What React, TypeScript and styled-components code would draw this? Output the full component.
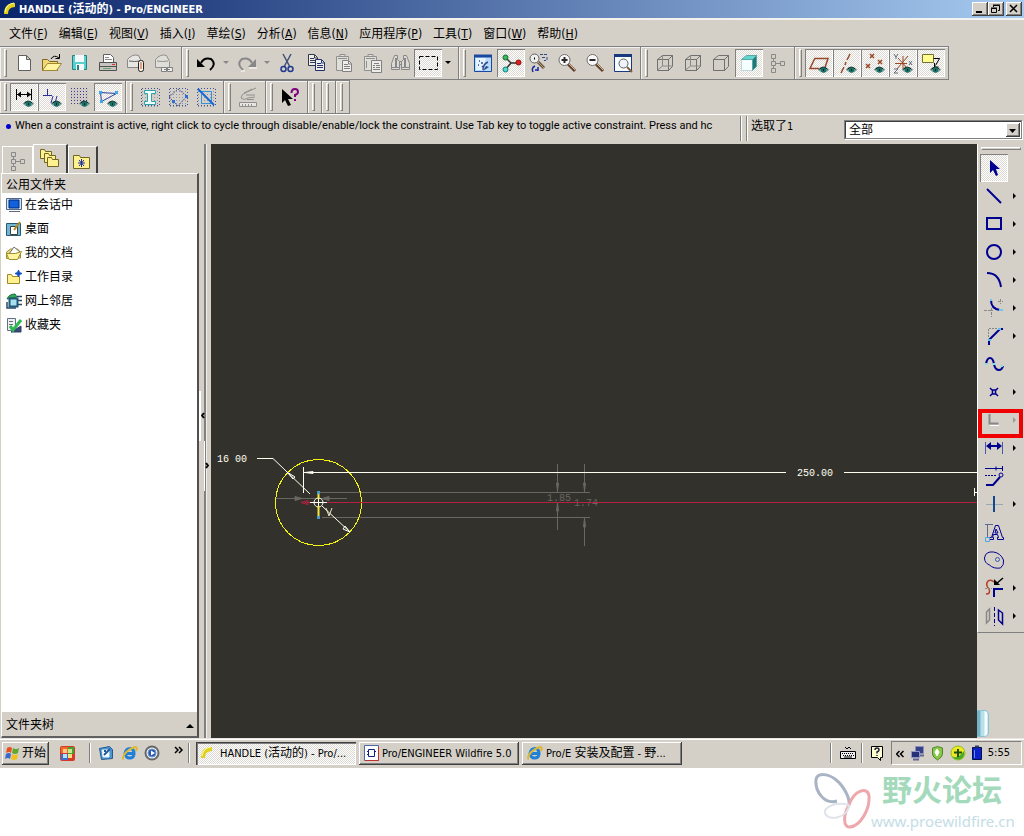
import React from "react";
import styled, { createGlobalStyle, css } from "styled-components";

const face = "#d4d0c8";
const shade = "#808080";
const navy = "#000090";
const dither = css`
  background: conic-gradient(#fff 25%, #dcd9d3 0 50%, #fff 0 75%, #dcd9d3 0) 0 0 / 2px 2px;
`;
const raised = css`
  box-shadow: inset -1px -1px #404040, inset 1px 1px #fff, inset -2px -2px ${shade};
`;

const Global = createGlobalStyle`
  *, *::before, *::after { box-sizing: border-box; }
  body { margin: 0; background: #fff; }
  body, button, select {
    font-family: "DejaVu Sans Condensed", "Noto Sans CJK SC", sans-serif;
    font-size: 12px;
    line-height: 16px;
    color: #000;
  }
  button { border: 0; padding: 0; margin: 0; background: none; text-align: left; }
  svg { display: block; }
`;

const Page = styled.div`
  min-height: 100vh;
  display: flex;
  flex-direction: column;
`;
const Desktop = styled.div`
  flex: 1;
  display: flex;
  flex-direction: column;
  background: ${face};
`;
const Latin = styled.span<{ $size?: number }>`
  font-size: ${(p) => p.$size ?? 11}px;
`;

const TitleBar = styled.header`
  display: flex;
  align-items: center;
  height: 18px;
  padding: 0 2px 0 4px;
  gap: 4px;
  background: linear-gradient(90deg, #0a246a, #a6caf0);
`;
const Title = styled.h1`
  flex: 1;
  margin: 0;
  font-size: 12px;
  line-height: 18px;
  font-weight: bold;
  color: #fff;
`;
const WindowButtons = styled.div`
  display: flex;
`;
const WindowButton = styled.button<{ $apart?: boolean }>`
  width: 16px;
  height: 14px;
  margin-left: ${(p) => (p.$apart ? 2 : 0)}px;
  background: ${face};
  ${raised}
`;

const MenuBar = styled.nav`
  display: flex;
  align-items: center;
  gap: 11px;
  height: 28px;
  padding: 3px 9px 0;
  box-shadow: inset 0 2px #f4f2ee;
`;
const MenuItem = styled.button`
  white-space: nowrap;
  height: 20px;
`;

const ToolRow = styled.div`
  display: flex;
  height: 34px;
`;
const Group = styled.div`
  display: flex;
  align-items: center;
  padding: 0 3px 0 4px;
  border-top: 1px solid ${shade};
  border-bottom: 1px solid ${shade};
  border-right: 1px solid ${shade};
  box-shadow: inset 1px 1px #f4f2ee;
`;
const Grip = styled.span`
  width: 3px;
  height: 28px;
  margin-right: 3px;
  border: 1px solid #fff;
  border-right-color: ${shade};
  border-bottom-color: ${shade};
`;
const ToolButton = styled.button<{ $on?: boolean }>`
  width: 28px;
  height: 28px;
  flex: none;
  ${(p) =>
    p.$on &&
    css`
      ${dither}
      box-shadow: inset 1px 1px ${shade}, inset -1px -1px #fff;
    `}
`;
const DropButton = styled.button`
  width: 13px;
  height: 28px;
`;
const BlankGroup = styled(Group)`
  width: 14px;
`;

const MessageBar = styled.div`
  display: flex;
  height: 30px;
  box-shadow: inset 0 1px #fff;
`;
const Message = styled.p`
  flex: 1;
  min-width: 0;
  margin: 0;
  padding: 4px 0 0 5px;
  display: flex;
  gap: 4px;
  overflow: hidden;
  white-space: nowrap;
  font-family: Roboto, sans-serif;
  font-size: 11px;
`;
const Bullet = styled.span`
  width: 5px;
  height: 5px;
  margin: 6px 0 0 1px;
  border-radius: 50%;
  background: #0000d0;
`;
const BarSplit = styled.span`
  width: 7px;
  margin: 2px 0 3px;
  border-left: 1px solid ${shade};
  border-right: 1px solid ${shade};
  box-shadow: inset 1px 0 #fff, 1px 0 #fff;
`;
const Selected = styled.label`
  width: 97px;
  padding: 4px 0 0 4px;
  white-space: nowrap;
`;
const FilterBox = styled.div`
  display: flex;
  width: 178px;
  height: 19px;
  margin: 6px 2px 0 0;
  background: #fff;
  border: 1px solid ${shade};
  box-shadow: inset 1px 1px #404040, 1px 1px #fff;
  position: relative;
`;
const Filter = styled.select`
  flex: 1;
  appearance: none;
  border: 0;
  padding: 0 4px;
  background: transparent;
`;
const FilterArrow = styled.span`
  position: absolute;
  right: 1px;
  top: 2px;
  width: 14px;
  height: 14px;
  background: ${face};
  pointer-events: none;
  ${raised}
`;

const Body = styled.main`
  flex: 1;
  display: flex;
  min-height: 0;
`;
const Side = styled.aside`
  width: 199px;
  flex: none;
  display: flex;
  flex-direction: column;
  padding-left: 1px;
`;
const Tabs = styled.div`
  display: flex;
  align-items: flex-end;
  height: 29px;
  padding-left: 1px;
`;
const Tab = styled.button<{ $w: number; $kind: "flat" | "active" | "normal" }>`
  width: ${(p) => p.$w}px;
  height: ${(p) => (p.$kind === "active" ? 29 : 27)}px;
  border: 1px solid #fff;
  border-bottom: 0;
  ${(p) => p.$kind !== "flat" && "border-right: 2px solid #404040;"}
`;
const Panel = styled.section`
  flex: 1;
  display: flex;
  flex-direction: column;
  border: 1px solid #fff;
  border-right: 2px solid #505050;
  border-bottom: 2px solid #606060;
`;
const PanelHead = styled.h2`
  margin: 0;
  height: 19px;
  padding: 3px 4px 0;
  font-size: 12px;
  font-weight: normal;
`;
const Folders = styled.ul`
  flex: 1;
  margin: 0;
  padding: 0 4px;
  list-style: none;
  background: #fff;
`;
const Folder = styled.button`
  display: flex;
  align-items: center;
  gap: 3px;
  height: 24px;
`;
const TreeToggle = styled.button`
  display: flex;
  align-items: center;
  justify-content: space-between;
  height: 24px;
  padding: 2px 3px 0 4px;
`;
const Splitter = styled.div`
  width: 12px;
  flex: none;
  display: flex;
  align-items: center;
  background: linear-gradient(90deg, ${face} 5px, ${shade} 5px 7px, #f0eeea 7px 8px, ${face} 8px);
`;
const SplitButton = styled.button<{ $low?: boolean }>`
  width: 5px;
  height: 50px;
  flex: none;
  margin: ${(p) => (p.$low ? "49px 0 0 0" : "0 0 51px 0")};
  border-left: ${(p) => (p.$low ? 1 : 2)}px solid #fff;
`;
const Viewport = styled.div`
  flex: 1;
  min-width: 0;
  background: #33312c;
  overflow: hidden;
  position: relative;
`;
const Drawing = styled.svg`
  position: absolute;
  inset: 0;
  width: 100%;
  height: 100%;
  font: 10px "Liberation Mono", monospace;
`;
const RightBar = styled.div`
  width: 47px;
  flex: none;
  display: flex;
  flex-direction: column;
  justify-content: space-between;
`;
const SketchTools = styled.div`
  padding: 3px 2px 2px;
  border-left: 1px solid #fff;
  border-bottom: 1px solid ${shade};
`;
const TopGrip = styled.div`
  height: 3px;
  margin: 0 1px 4px;
  border: 1px solid #fff;
  border-right-color: ${shade};
  border-bottom-color: ${shade};
`;
const SketchRow = styled.div<{ $marked?: boolean }>`
  display: flex;
  position: relative;
  ${(p) =>
    p.$marked &&
    css`
      &::after {
        content: "";
        position: absolute;
        inset: 3px -1px -4px -2px;
        border: 4px solid #f00000;
        pointer-events: none;
      }
    `}
`;
const Flyout = styled.button`
  width: 12px;
  height: 28px;
`;
const Gadget = styled.div`
  width: 12px;
  height: 27px;
  margin-bottom: 1px;
  border-radius: 0 5px 5px 0;
  border: 1px solid #88c4d4;
  border-left: 0;
  background: linear-gradient(90deg, #78b4c8 3px, #b8e0ec 4px 7px, #f4fcff 8px 10px, #a8d8e8);
`;

const TaskBar = styled.footer`
  display: flex;
  align-items: center;
  height: 30px;
  padding: 0 2px;
  background: ${face};
  box-shadow: inset 0 1px #e8e5e0, inset 0 2px #fff;
`;
const Start = styled.button`
  display: flex;
  align-items: center;
  gap: 2px;
  width: 47px;
  height: 23px;
  padding-left: 2px;
  white-space: nowrap;
  ${raised}
`;
const Quick = styled.div`
  display: flex;
  align-items: center;
  width: 147px;
  padding-left: 10px;
`;
const QuickButton = styled.button<{ $gap?: number }>`
  margin-right: ${(p) => p.$gap ?? 8}px;
`;
const Divider = styled.span<{ $gap?: number }>`
  width: 2px;
  height: 20px;
  margin-right: ${(p) => p.$gap ?? 6}px;
  border-left: 1px solid ${shade};
  border-right: 1px solid #fff;
`;
const Tasks = styled.div`
  flex: 1;
  display: flex;
  gap: 3px;
  min-width: 0;
`;
const Task = styled.button<{ $on?: boolean }>`
  display: flex;
  align-items: center;
  gap: 3px;
  width: 160px;
  height: 23px;
  padding-left: 5px;
  white-space: nowrap;
  overflow: hidden;
  ${raised}
  ${(p) =>
    p.$on &&
    css`
      ${dither}
      box-shadow: inset 1px 1px #404040, inset 2px 2px ${shade}, inset -1px -1px #fff;
    `}
`;
const Tray = styled.div`
  display: flex;
  align-items: center;
  justify-content: space-between;
  width: 131px;
  height: 24px;
  padding: 0 11px 0 4px;
  border: 1px solid ${shade};
  border-right-color: #fff;
  border-bottom-color: #fff;
`;
const Brand = styled.div`
  display: flex;
  justify-content: flex-end;
  height: 68px;
  padding: 4px 9px 0 0;
  background: #fff;
`;
const BrandText = styled.div`
  width: 144px;
  white-space: nowrap;
`;
const BrandName = styled.div`
  padding-left: 11px;
  font: bold 30px/32px "Noto Sans CJK SC", sans-serif;
  color: #a4dabb;
`;
const BrandLink = styled.a`
  display: block;
  margin-top: 7px;
  font: 15px/20px "Noto Sans", sans-serif;
  color: #c4dde6;
  text-decoration: none;
`;

/* Sizes the Latin runs of a mixed label one step below the Chinese ones. */
const Mixed = ({ text }: { text: string }) => (
  <span>
    {text.split(/([\u3000-\u9fff]+)/).map((part, i) =>
      i % 2 ? <React.Fragment key={i}>{part}</React.Fragment> : <Latin key={i}>{part}</Latin>
    )}
  </span>
);

const Svg = ({ w = 28, h = 28, children }: { w?: number; h?: number; children: React.ReactNode }) => (
  <svg width={w} height={h} viewBox={`0 0 ${w} ${h}`} fill="none" stroke="#000" aria-hidden="true">
    {children}
  </svg>
);
const Eye = () => (
  <g stroke="none">
    <path d="M13 21q5-6 11 0q-5 5-11 0z" fill="#80a8a0" />
    <path d="M13 21q5-7 11 0q-5-3-11 0z" fill="#102020" />
    <circle cx="18.500" cy="21" r="2.800" fill="#187068" />
    <path d="M18 20h1v2h-1z" fill="#002828" />
  </g>
);
const Sheet = ({ x, y, c }: { x: number; y: number; c: string }) => (
  <g transform={`translate(${x} ${y})`} stroke={c}>
    <path d="M.5.5h6l3 3v8h-9z" fill="#f0eeea" />
    <path d="M2 4.500h4M2 6.500h6M2 8.500h6M6.500 1v3h3" />
  </g>
);
const grey = "#909090";
const Cube = ({ hidden, solid }: { hidden?: boolean; solid?: boolean }) => (
  <g stroke={solid ? "#58a8a8" : "#707070"}>
    <path d="M6.500 10.500h11v11h-11z" fill={solid ? "#f4ffff" : "none"} stroke={solid ? "#c0d8d8" : "#707070"} />
    <path d="M6.500 10.500l5-4h10l-4 4z" fill={solid ? "#60d8d0" : "none"} />
    <path d="M21.500 6.500v11l-4 4v-11z" fill={solid ? "#207878" : "none"} />
    {hidden && <path d="M11.500 7v10h10M11.500 17l-5 4" stroke="#888" />}
  </g>
);
const Tree = () => (
  <path d="M8.500 5.500h4v4h-4zM8.500 12.500h4v4h-4zM8.500 19.500h4v4h-4zM17.500 12.500h4v4h-4zM10.500 9.500v3M10.500 16.500v3M12.500 14.500h5" stroke="#888" />
);
const Dots = () => (
  <g stroke="#405090" strokeDasharray="1 2">
    <path d="M6 5.500h18M6 8.500h18M6 11.500h18M6 14.500h18M6 17.500h18M6 20.500h18M6 23.500h18" strokeOpacity=".45" />
    <path d="M6 5.500h18M6 22.500h18M5.500 6v16M23.500 6v16" />
  </g>
);
const Lens = ({ sign }: { sign: string }) => (
  <>
    <path d="M15 15l7 7" stroke="#604030" strokeWidth="3" />
    <path d="M16 15l6 6" stroke="#d8b888" />
    <circle cx="11.500" cy="11" r="5.500" stroke="#707070" fill="#f8f8f8" />
    <path d={sign} strokeWidth="2" stroke="#302828" />
  </>
);

const icons: Record<string, React.ReactNode> = {
  new: <path d="M8.500 6.500h8l4 4v11h-12zM16.500 6.500v4h4" fill="#fff" stroke="#606060" />,
  open: (
    <>
      <path d="M4.500 21.500v-11h5l2 2h8v9z" fill="#f0d878" stroke="#806818" />
      <path d="M4.500 21.500l5-7h14l-5 7z" fill="#fff4a0" stroke="#a08830" />
      <path d="M13 10q3-5 8-1M21.500 5v4.500h-4" />
    </>
  ),
  save: (
    <>
      <path d="M6.500 6.500h14v14h-14z" fill="#58d0d0" stroke="#288080" />
      <path d="M9 6h9v7H9zM10 15h8v6h-8z" fill="#f4f8f8" stroke="none" />
      <path d="M12 16v5" stroke="#288080" strokeWidth="2" />
    </>
  ),
  print: (
    <>
      <path d="M9.500 13.500v-8h7l3 3v5" fill="#fff" stroke="#606060" />
      <path d="M11 8.500h4M11 10.500h7" stroke="#888" />
      <path d="M5.500 13.500h17v8h-17z" fill="#c8c4c0" stroke="#505050" />
      <path d="M6 17.500h16" stroke="#505050" />
      <path d="M18 15.500h3" stroke="#e03020" />
      <path d="M9 19.500h8" stroke="#60a868" />
    </>
  ),
  disc: (
    <>
      <path d="M5.500 18.500v-8q5-6 11-4l3 6v6z" fill="#e8e6e2" stroke="#888" />
      <path d="M7 12q6 1 11 0" stroke="#606060" />
      <rect x="16.500" y="11.500" width="5" height="11" rx="2" fill="#f4f0e0" stroke="#202020" />
      <path d="M19 13v7" stroke="#c05020" />
    </>
  ),
  discLink: (
    <>
      <path d="M5.500 18.500v-8q5-6 11-4l3 6v6z" fill="#e0ded8" stroke={grey} />
      <path d="M7 12q6 1 11 0" stroke={grey} />
      <path d="M11.500 18.500h5v4h-5zM17.500 18.500h5v4h-5zM14 20.500h6" stroke="#808080" fill="#eee" />
    </>
  ),
  undo: (
    <>
      <path d="M9 14q3-6 10-4q6 5-1 11" strokeWidth="2" />
      <path d="M5 10v8h8z" fill="#000" stroke="none" />
    </>
  ),
  redo: (
    <>
      <path d="M19 14q-3-6-10-4q-6 5 1 11" stroke="#888" strokeWidth="2" />
      <path d="M23 10v8h-8z" fill="#888" stroke="none" />
      <path d="M8 22h4M16 19h8" stroke="#fff" />
    </>
  ),
  cut: (
    <>
      <path d="M9 5l7 13M17 5l-7 13" stroke="#405078" strokeWidth="1.500" />
      <circle cx="9.500" cy="20" r="2.500" stroke="#203890" strokeWidth="1.500" />
      <circle cx="16.500" cy="20" r="2.500" stroke="#203890" strokeWidth="1.500" />
    </>
  ),
  copy: (
    <>
      <Sheet x={6} y={5} c="#303848" />
      <Sheet x={13} y={10} c="#203070" />
    </>
  ),
  paste: (
    <>
      <path d="M6.500 7.500h12v14h-12zM10 7.500v-2h5v2M8 9.500h9" fill="#e0ded8" stroke={grey} />
      <Sheet x={12} y={11} c="#808080" />
    </>
  ),
  pasteSpecial: (
    <>
      <path d="M6.500 7.500h12v14h-12zM10 7.500v-2h5v2M8 9.500h9M8.500 12v7" fill="#e0ded8" stroke={grey} />
      <path d="M13.500 11.500h10v12h-10zM16 14.500h5M15 16.500h2M18 16.500h4M15 18.500h2M18 18.500h4M15 20.500h7" fill="#eeece8" stroke="#808080" />
    </>
  ),
  find: (
    <>
      <path d="M8.500 6.500h3v4l2 2v8h-8v-6zM17.500 6.500h3l3 8v6h-8v-8l2-2zM13 12.500h3M13 15.500h3M5 18.500h8M16 18.500h7" fill="#dcdad4" stroke="#888" />
      <path d="M10 9v9M19 9v9" stroke="#888" strokeWidth="2" />
    </>
  ),
  selectBox: <rect x="5.500" y="7.500" width="18" height="13" strokeDasharray="4 2" />,
  sketch: (
    <>
      <path d="M5.500 6.500h17v16h-17z" fill="#b8dcf8" stroke="#1848a0" />
      <path d="M7 9h10l-3 12H7z" fill="#e4f4ff" stroke="none" />
      <path d="M5 7h18" stroke="#1848a0" strokeWidth="3" />
      <path d="M14 21q0-6 5-8M10 12h1M12 14h2M9 16h1M13 17l2 2" stroke="#304890" strokeWidth="1.500" />
      <path d="M14 22l3-5l3 1z" fill="#284898" stroke="none" />
    </>
  ),
  orient: (
    <>
      <path d="M9 9l5 5l-5 6M13 14h7" strokeWidth="1.500" stroke="#303030" />
      <circle cx="8.500" cy="8.500" r="2.500" fill="#38b858" stroke="#107030" />
      <circle cx="8.500" cy="20.500" r="2.500" fill="#50d8c8" stroke="#108080" />
      <circle cx="21.500" cy="13.500" r="2.500" fill="#e02020" stroke="#901010" />
    </>
  ),
  reorient: (
    <>
      <path d="M13 13l6 6" stroke="#605040" strokeWidth="3" />
      <path d="M13 13l6 6" stroke="#c8a078" />
      <circle cx="9.500" cy="9.500" r="4.500" stroke="#606060" fill="#eee" />
      <path d="M9 9.500h1" strokeWidth="2" />
      <path d="M15 5.500h3M19 5.500h3M17 8.500h3M22 8v3M19 11.500h2" stroke="#304890" />
      <path d="M10 17q-4 2-2 6M13 22v-4M10 21h3" stroke="#1828a0" strokeWidth="1.500" />
    </>
  ),
  zoomIn: <Lens sign="M8.500 11h6M11.500 8v6" />,
  zoomOut: <Lens sign="M8.500 11h6" />,
  refit: (
    <>
      <path d="M5.500 5.500h17v17h-17z" fill="#f8fcff" stroke="#183880" />
      <path d="M5 6.500h18" stroke="#183880" strokeWidth="3" />
      <path d="M18 18l5 5" stroke="#806040" strokeWidth="2" />
      <circle cx="14.500" cy="14.500" r="4.500" stroke="#606060" fill="#eef4f8" />
    </>
  ),
  wire: <Cube hidden />,
  hiddenLine: <Cube hidden />,
  noHidden: <Cube />,
  shaded: <Cube solid />,
  tree: <Tree />,
  planes: (
    <>
      <path d="M10 9.500h13l-3 9M10 9l-5 10.500h9" stroke="#984828" strokeWidth="1.500" />
      <Eye />
    </>
  ),
  axes: (
    <>
      <path d="M17 5l-3 6M13 13l-1 3M11 18l-3 6" stroke="#984828" strokeWidth="1.500" />
      <Eye />
    </>
  ),
  points: (
    <>
      <path d="M9 5l4 4M13 5l-4 4M17 11l4 4M21 11l-4 4M5 15l4 4M9 15l-4 4" stroke="#984828" strokeWidth="1.500" />
      <Eye />
    </>
  ),
  csys: (
    <>
      <path d="M14 7v13M6 14.500h12M9 9l9 10M19 7l-11 13" stroke="#984828" />
      <path d="M5 5l2 3l2-3M7 8v2M20 12l3 4M23 12l-3 4M5 20h4l-4 4h4" stroke="#606878" />
      <Eye />
    </>
  ),
  notes: (
    <>
      <path d="M5.500 5.500h11v8h-11z" fill="#ffff90" stroke="#787030" />
      <path d="M16.500 9.500h6l-4 7M17.500 14v4h4" />
      <Eye />
    </>
  ),
  dims: (
    <>
      <path d="M6.500 6v11M21.500 6v11" />
      <path d="M7 11.500h14M9.500 10v3M18.500 10v3" />
      <path d="M7 11.500l4-3v6zM21 11.500l-4-3v6z" fill="#000" stroke="none" />
      <Eye />
    </>
  ),
  constraints: (
    <>
      <path d="M9.500 6v6M5 12.500h9M13 20l2-7M17 20l2-7" stroke="#2830a0" />
      <Eye />
    </>
  ),
  grid: (
    <>
      <path d="M5 5.500h17M5 8.500h17M5 11.500h17M5 14.500h17M5 17.500h17M5 20.500h8" stroke="#403888" strokeDasharray="1 2" />
      <path d="M5 7h17M5 10h17M5 13h17M5 16h17" stroke="#a898c0" strokeDasharray="1 1" strokeOpacity=".5" />
      <Eye />
    </>
  ),
  vertices: (
    <>
      <path d="M6.500 9.500l16 1l-15 8z" stroke="#2840a0" />
      <path d="M5 8h3v3H5zM21 8h3v3h-3zM6 17h3v3H6z" fill="#38a8e8" stroke="none" />
      <Eye />
    </>
  ),
  shade: (
    <>
      <Dots />
      <path d="M8.500 7.500h11v3h-4v8h4v3h-11v-3h3v-8h-3z" fill="#f0ffff" stroke="#30a0a8" />
    </>
  ),
  openEnds: (
    <>
      <Dots />
      <path d="M5 14l9-8l9 7l-9 10z" stroke="#505890" strokeDasharray="2 1" />
      <path d="M21 12h3v3h-3zM8 17h3v3H8z" fill="#2870d8" stroke="none" />
    </>
  ),
  overlap: (
    <>
      <Dots />
      <path d="M6.500 8.500h13v12h-10v-9" stroke="#3890d8" />
      <path d="M6 6l16 16" stroke="#1868d0" strokeWidth="2" />
    </>
  ),
  analyze: (
    <>
      <path d="M22 5l-9 4q-6 2-6 6q3 3 7 0l7-1M12 12h9M13 16.500h7M10 10l8-4" stroke="#909090" />
      <path d="M5.500 19.500h17v4h-17zM8.500 21v3M11.500 21v3M14.500 21v3M17.500 21v3" stroke="#909090" fill="#e8e6e0" />
    </>
  ),
  help: (
    <>
      <path d="M6 6v14l3-3l3 6l3-1l-3-6h5z" fill="#000" stroke="none" />
      <path d="M15.500 10q0-4 3.500-4q3 0 3 3q0 2-3 3v2M19 16v2" stroke="#800080" strokeWidth="2" />
    </>
  ),
  arrow: <path d="M10 6v13l3-3l3 6l2-1l-2-6h4z" fill={navy} stroke="none" />,
  line: <path d="M7 7l14 14" stroke={navy} strokeWidth="2" />,
  rect: <rect x="7" y="8" width="14" height="11" stroke={navy} strokeWidth="2" />,
  circle: <circle cx="14" cy="14" r="7" stroke={navy} strokeWidth="2" />,
  arc: <path d="M7 7q12 0 14 14" stroke={navy} strokeWidth="2" />,
  fillet: (
    <>
      <path d="M11 6q0 9 9 10" stroke={navy} strokeWidth="2" />
      <path d="M19 16h4M10 6h2" stroke="#70c8f0" strokeWidth="2" />
      <path d="M20.500 5v5M18 7.500h5M4 16.500h9M11.500 14v9" stroke="#888" strokeDasharray="3 1" />
    </>
  ),
  chamfer: (
    <>
      <path d="M9 23v-5L20 7h3" stroke={navy} strokeWidth="2" />
      <path d="M8.500 15V6.500H17" stroke="#888" strokeDasharray="2 1" />
      <path d="M8 18h3M18 7h3" stroke="#58c0f0" strokeWidth="2" />
    </>
  ),
  spline: (
    <>
      <path d="M6 14q1-6 4-6q3 0 4 6q1 6 5 6q3 0 4-4" stroke={navy} strokeWidth="2" />
      <path d="M5 14h2M13 14h3M21 16h2" stroke="#80e0e8" strokeWidth="2" />
    </>
  ),
  point: <path d="M10 10l2 2h4l2-2M10 18l2-2h4l2 2M12.500 12v4M15.500 12v4" stroke={navy} strokeWidth="1.500" />,
  coord: (
    <>
      <path d="M9.500 8v9.500h9" stroke="#888" strokeWidth="2" />
      <path d="M10 19.500h9" stroke="#fff" />
    </>
  ),
  dimension: (
    <>
      <path d="M5.500 8v12M22.500 8v12" stroke="#4858a8" />
      <path d="M8 12h12" stroke={navy} strokeWidth="2" />
      <path d="M6 12l5-4v8zM22 12l-5-4v8z" fill={navy} stroke="none" />
    </>
  ),
  modify: (
    <>
      <path d="M5 6.500h17M22.500 4v5M16 4.500v4" stroke={navy} />
      <path d="M5 13.500h12" stroke={navy} strokeDasharray="2 1" />
      <path d="M6 23h7l7-8" stroke={navy} strokeWidth="2" />
      <circle cx="21" cy="13" r="2" stroke={navy} />
    </>
  ),
  constrain: (
    <>
      <path d="M6 14.500h17" stroke="#98a8b8" />
      <path d="M14 6v16" stroke="#104890" strokeWidth="2" />
    </>
  ),
  text: (
    <>
      <path d="M7.500 6v14M5 6.500h8" stroke="#606890" />
      <path d="M9.500 21.500v-2h2l4-12h3l4 12h1v2h-6v-2h1l-1-3h-4l-1 3h1v2zM16 11l-1 4h3z" stroke={navy} />
      <path d="M5.500 19.500h4v4h-4z" stroke="#50a8e0" />
    </>
  ),
  palette: (
    <>
      <path d="M4.500 12q1-7 9-6q7 1 10 8q1 5-3 8q-7 1-11-3q-5-2-5-7z" stroke={navy} />
      <circle cx="17.500" cy="13.500" r="2" stroke="#3858b0" />
    </>
  ),
  trim: (
    <>
      <path d="M6 20q5 0 3-5q-4-4-1-8q3-2 6 1" stroke="#b84028" strokeWidth="1.500" />
      <path d="M5 14.500h7M13.500 23v-8" stroke="#888" strokeDasharray="2 1" />
      <path d="M14 23v-8h9" stroke={navy} strokeWidth="2" />
      <path d="M23 4l-7 6" strokeWidth="1.500" />
      <path d="M14 11V5l6 6z" fill="#000" stroke="none" />
    </>
  ),
  mirror: (
    <>
      <path d="M6.500 10l3-3v11l-3 3z" stroke="#888" strokeWidth="1.500" />
      <path d="M14.500 5v19" stroke={navy} strokeDasharray="4 2" />
      <path d="M18.500 8l4 3v11l-4-4z" stroke={navy} strokeWidth="1.500" />
    </>
  ),
};

const menus: [string, string][] = [
  ["文件", "F"], ["编辑", "E"], ["视图", "V"], ["插入", "I"], ["草绘", "S"], ["分析", "A"],
  ["信息", "N"], ["应用程序", "P"], ["工具", "T"], ["窗口", "W"], ["帮助", "H"],
];

type Item = { id: string; on?: boolean; drop?: "black" | "grey" };
const rowOne: Item[][] = [
  [{ id: "new" }, { id: "open" }, { id: "save" }, { id: "print" }, { id: "disc" }, { id: "discLink" }],
  [
    { id: "undo", drop: "grey" }, { id: "redo", drop: "grey" }, { id: "cut" }, { id: "copy" },
    { id: "paste" }, { id: "pasteSpecial" }, { id: "find" }, { id: "selectBox", on: true, drop: "black" },
  ],
  [{ id: "sketch" }, { id: "orient", on: true }, { id: "reorient" }, { id: "zoomIn" }, { id: "zoomOut" }, { id: "refit" }],
  [{ id: "wire" }, { id: "hiddenLine" }, { id: "noHidden" }, { id: "shaded", on: true }, { id: "tree" }],
  ["planes", "axes", "points", "csys", "notes"].map((id) => ({ id, on: true })),
];
const rowTwo: Item[][] = [
  [{ id: "dims", on: true }, { id: "constraints", on: true }, { id: "grid" }, { id: "vertices", on: true }],
  [{ id: "shade" }, { id: "openEnds" }, { id: "overlap" }],
  [{ id: "analyze" }],
  [{ id: "help" }],
];
const sketchTools: { id: string; fly?: boolean }[] = [
  { id: "arrow" }, { id: "line", fly: true }, { id: "rect", fly: true }, { id: "circle", fly: true },
  { id: "arc", fly: true }, { id: "fillet", fly: true }, { id: "chamfer", fly: true }, { id: "spline" },
  { id: "point", fly: true }, { id: "coord", fly: true }, { id: "dimension", fly: true }, { id: "modify" },
  { id: "constrain", fly: true }, { id: "text" }, { id: "palette" }, { id: "trim", fly: true }, { id: "mirror", fly: true },
];

const ToolGroups = ({ groups }: { groups: Item[][] }) => (
  <>
    {groups.map((items, g) => (
      <Group key={g} role="toolbar">
        <Grip />
        {items.map((it) => (
          <React.Fragment key={it.id}>
            <ToolButton $on={it.on} aria-label={it.id} aria-pressed={it.on}>
              <Svg>{icons[it.id]}</Svg>
            </ToolButton>
            {it.drop && (
              <DropButton aria-label={`${it.id} options`}>
                <Svg w={13}>
                  <path d="M3 12h6l-3 3z" fill={it.drop === "grey" ? "#888" : "#000"} stroke="none" />
                </Svg>
              </DropButton>
            )}
          </React.Fragment>
        ))}
      </Group>
    ))}
  </>
);

const YellowFolder = ({ x = 0, y = 0 }) => (
  <path d={`M${x + 0.5} ${y + 10.5}v-9h4l1 2h6v7z`} fill="#fff090" stroke="#706820" />
);
const Ie = () => (
  <Svg w={16} h={16}>
    <path d="M3 8.500h9q0-5-4-5t-5 5q1 5 5 4.500q3 0 4-3" stroke="#2080d8" strokeWidth="3" />
    <path d="M2 14Q0 14 2 10Q6 4 13 2q3 0 1 4" stroke="#e0b830" strokeWidth="2" />
  </Svg>
);
const PipeLogo = ({ w = 11 }: { w?: number }) => (
  <Svg w={w} h={14}>
    <path d="M2 12q0-9 9-9" stroke="#e0d020" strokeWidth="4" />
    <path d="M1 10q1-8 9-9" stroke="#fffca0" />
  </Svg>
);

const folders: [string, React.ReactNode][] = [
  ["在会话中", <><path d="M.5 1.500h15v11H.5z" fill="#d8e4f0" stroke="#506890" /><path d="M3 3h10v8H3z" fill="#1060e0" stroke="#002870" /><path d="M3 14.500h11" stroke="#606880" /></>],
  ["桌面", <><path d="M.5 2.500h14v12H.5z" fill="#70b8d0" stroke="#285878" /><path d="M4.500 5.500h7v8h-7z" fill="#fff" stroke="#404040" /><path d="M14 1L8 9" stroke="#b88820" strokeWidth="2" /></>],
  ["我的文档", <><path d="M.5 13.500V7l4-3h7l3 3v6z" fill="#e8d880" stroke="#a09030" /><path d="M3 9l5-7l6 5" fill="#fff" stroke="#707070" /><path d="M.5 8.500h9l6-2l-4 8H3z" fill="#fff4a0" stroke="#a09030" /></>],
  ["工作目录", <><path d="M1.500 14.500v-9h4l1 2h7v7z" fill="#fff090" stroke="#a08828" /><path d="M12.500 1l1 2.500l2.500 1l-2.500 1l-1 2.500l-1-2.500l-2.500-1l2.500-1z" fill="#1050c0" stroke="#1050c0" /></>],
  ["网上邻居", <><path d="M1 6q2-5 8-5l2 3z" fill="#30a850" stroke="#207048" /><path d="M3.500 5.500h8v8h-8z" fill="#a8e0f0" stroke="#205878" strokeWidth="2" /><path d="M11 3.500h5M12 7.500h4M11 11.500h5M1 9v6h9" stroke="#284868" strokeWidth="1.500" /></>],
  ["收藏夹", <><path d="M1.500 1.500h8v12h-8z" fill="#eef0f0" stroke="#607080" /><path d="M3 4.500h4M3 7.500h4" stroke="#607080" /><path d="M5 15l10-6v6z" fill="#384878" stroke="#304070" /><path d="M4 9l3 4L15 3" stroke="#30b850" strokeWidth="3" /></>],
];

const SketchDrawing = () => (
  <Drawing fill="none">
    <g transform="translate(-211 -144)">
      <g stroke="#686762">
        <path d="M318 492.500h272M322 517.500h268M276 498.500h71M557.500 464v28M557.500 503v27M584.500 464v28M584.500 518v28" />
        <path d="M302 498.500l-7-2v4zM322 498.500l7-2v4zM557.500 491l-1-8h2zM557.500 503l-1 8h2zM584.500 491l-1-8h2zM584.500 518l-1 9h2z" fill="#686762" />
      </g>
      <g fill="#686762">
        <text x="547" y="501">1.85</text>
        <text x="574" y="506">1.74</text>
      </g>
      <circle cx="318.500" cy="502.500" r="43" stroke="#f4f410" shapeRendering="crispEdges" />
      <path d="M305 502.500h1400" stroke="#b82040" />
      <path d="M301 502.500l7-2v4z" stroke="#b82040" />
      <g stroke="#fffff0">
        <path d="M304 472.500h482M844 472.500h1100M303.500 467v26" />
        <path d="M305 472.500l8-1v2z" />
        <path d="M257 458.500h16L310 494M322 506l28 26" />
        <path d="M287 472l8 5l-2 2zM350 532l-7-3l2-3z" />
        <path d="M310 502.500h17M318.500 496v12" />
        <circle cx="318.500" cy="502.500" r="4.500" />
        <path d="M326 508l3 8l3-8" stroke="#e8e8c0" />
        <path d="M974.500 488v8M974 492.500h4" />
      </g>
      <path d="M318.500 492v7M318.500 506v11" stroke="#f4e840" strokeWidth="2" />
      <path d="M317 491h3v3h-3zM317 516h3v3h-3z" fill="#4898c8" />
      <g fill="#fffff0">
        <text x="217" y="462" xmlSpace="preserve">16 00</text>
        <text x="797" y="476">250.00</text>
      </g>
    </g>
  </Drawing>
);

export default function App() {
  return (
    <Page>
      <Global />
      <Desktop>
        <TitleBar>
          <PipeLogo />
          <Title><Mixed text="HANDLE (活动的) - Pro/ENGINEER" /></Title>
          <WindowButtons>
            <WindowButton aria-label="最小化"><Svg w={15} h={14}><path d="M4 10h6" strokeWidth="2" /></Svg></WindowButton>
            <WindowButton aria-label="还原"><Svg w={15} h={14}><path d="M5.500 5V3.500h6v5H10M5 3h7M3.500 6.500h5v4h-5zM3 6h6" /></Svg></WindowButton>
            <WindowButton $apart aria-label="关闭"><Svg w={15} h={14}><path d="M4 3l7 7M11 3l-7 7" strokeWidth="1.500" /></Svg></WindowButton>
          </WindowButtons>
        </TitleBar>
        <MenuBar>
          {menus.map(([name, key]) => (
            <MenuItem key={key}>{name}<Latin $size={12}>(<u>{key}</u>)</Latin></MenuItem>
          ))}
        </MenuBar>
        <ToolRow><ToolGroups groups={rowOne} /></ToolRow>
        <ToolRow>
          <ToolGroups groups={rowTwo} />
          <BlankGroup><Grip /></BlankGroup>
          <BlankGroup><Grip /></BlankGroup>
          <BlankGroup><Grip /></BlankGroup>
        </ToolRow>
        <MessageBar>
          <Message>
            <Bullet />
            When a constraint is active, right click to cycle through disable/enable/lock the constraint. Use Tab key to toggle active constraint. Press and hc
          </Message>
          <BarSplit />
          <Selected htmlFor="filter"><Mixed text="选取了1" /></Selected>
          <FilterBox>
            <Filter id="filter"><option>全部</option></Filter>
            <FilterArrow><Svg w={14} h={14}><path d="M3 6h7l-3.500 4z" fill="#000" stroke="none" /></Svg></FilterArrow>
          </FilterBox>
        </MessageBar>
        <Body>
          <Side>
            <Tabs role="tablist">
              <Tab role="tab" $w={31} $kind="flat" aria-label="模型树"><Svg><Tree /></Svg></Tab>
              <Tab role="tab" $w={35} $kind="active" aria-label="文件夹浏览器">
                <Svg w={30} h={28}>
                  <YellowFolder x={6} y={3} /><YellowFolder x={10} y={7} /><YellowFolder x={13} y={11} />
                </Svg>
              </Tab>
              <Tab role="tab" $w={30} $kind="normal" aria-label="收藏夹">
                <Svg w={26} h={26}>
                  <path d="M4.500 21.500v-13h6l1 2h9v11z" fill="#fff090" stroke="#706820" />
                  <path d="M12.500 12v8M9 16h7M10 13l5 6M15 13l-5 6" stroke="#1830a0" />
                </Svg>
              </Tab>
            </Tabs>
            <Panel>
              <PanelHead>公用文件夹</PanelHead>
              <Folders>
                {folders.map(([name, art]) => (
                  <li key={name}><Folder><Svg w={16} h={16}>{art}</Svg>{name}</Folder></li>
                ))}
              </Folders>
              <TreeToggle>文件夹树<Svg w={8} h={5}><path d="M0 5h8L4 1z" fill="#000" stroke="none" /></Svg></TreeToggle>
            </Panel>
          </Side>
          <Splitter>
            <SplitButton aria-label="收起"><Svg w={4} h={7}><path d="M3 1L1 3.500L3 6" strokeWidth="2" /></Svg></SplitButton>
            <SplitButton $low aria-label="展开"><Svg w={4} h={7}><path d="M1 1l2 2.500L1 6" strokeWidth="2" /></Svg></SplitButton>
          </Splitter>
          <Viewport><SketchDrawing /></Viewport>
          <RightBar>
            <SketchTools role="toolbar">
              <TopGrip />
              {sketchTools.map(({ id, fly }) => (
                <SketchRow key={id} $marked={id === "coord"}>
                  <ToolButton $on={id === "arrow"} aria-label={id}><Svg>{icons[id]}</Svg></ToolButton>
                  {fly && (
                    <Flyout aria-label={`${id} options`}>
                      <Svg w={12}><path d="M5 11v6l3-3z" fill={id === "coord" ? "#999" : "#000"} stroke="none" /></Svg>
                    </Flyout>
                  )}
                </SketchRow>
              ))}
            </SketchTools>
            <Gadget />
          </RightBar>
        </Body>
        <TaskBar>
          <Start>
            <Svg w={16} h={16}>
              <g stroke="none">
                <path d="M3 3q3-2 5 0l-1 5q-2-2-5 0z" fill="#e85020" />
                <path d="M9 3q3 2 6 0l-1 5q-3 2-6 0z" fill="#60a830" />
                <path d="M2 9q3-2 5 0l-1 5q-2-2-5 0z" fill="#3868d0" />
                <path d="M8 9q3 2 6 0l-1 5q-3 2-6 0z" fill="#f0c020" />
              </g>
            </Svg>
            开始
          </Start>
          <Quick>
            <QuickButton $gap={13} aria-label="Office">
              <Svg w={17} h={17}><g stroke="none"><rect x="1" y="1" width="15" height="15" rx="2" fill="#d83828" /><path d="M9 2h6v7H9z" fill="#48a030" /><path d="M2 2h7v6H2z" fill="#e87020" /><path d="M2 9h7v6H2z" fill="#3870d0" /><path d="M4 4h4v4H4z" fill="#ffc890" /><path d="M9 4h4v4H9z" fill="#c8e890" /><path d="M4 9h4v4H4z" fill="#b8e0f8" /><path d="M9 9h4v4H9z" fill="#ffe080" /></g></Svg>
            </QuickButton>
            <Divider $gap={7} />
            <QuickButton aria-label="显示桌面">
              <Svg w={16} h={16}><path d="M1.500 3.500l10-2l3 3v9l-11 1z" fill="#4898d0" stroke="#285898" /><path d="M4 5h7v7H5z" fill="#fff" stroke="#d8ecf8" /><path d="M6 10l6-6M6 6h2" stroke="#285898" strokeWidth="2" /></Svg>
            </QuickButton>
            <QuickButton $gap={6} aria-label="Internet Explorer"><Ie /></QuickButton>
            <QuickButton $gap={14} aria-label="媒体播放器">
              <Svg w={16} h={16}><circle cx="8" cy="8" r="6.500" fill="#e8f0f8" stroke="#686868" strokeWidth="2" /><circle cx="8" cy="8" r="4" fill="#2858b0" stroke="#7098d0" /><path d="M7 5.500v5l4-2.500z" fill="#fff" stroke="none" /></Svg>
            </QuickButton>
            <QuickButton $gap={4} aria-label="更多"><Svg w={10} h={16}><path d="M1 2l3 3l-3 3M5 2l3 3l-3 3" strokeWidth="1.500" /></Svg></QuickButton>
            <Divider $gap={0} />
          </Quick>
          <Tasks>
            <Task $on>
              <PipeLogo w={16} /><Mixed text="HANDLE (活动的) - Pro/..." />
            </Task>
            <Task>
              <Svg w={15} h={16}><path d="M.5.5h14v15H.5z" fill="#fff" stroke="#4868b0" /><path d="M1 15.500h13.500V2" stroke="#c03028" /><path d="M4.500 4.500h6v7h-6zM3 6.500h2M3 9.500h2M10 6.500h2" stroke="#102080" /></Svg>
              <Mixed text="Pro/ENGINEER Wildfire 5.0" />
            </Task>
            <Task><Ie /><Mixed text="Pro/E 安装及配置 - 野..." /></Task>
          </Tasks>
          <Divider $gap={8} />
          <QuickButton $gap={4} aria-label="输入法">
            <Svg w={17} h={16}><path d="M.5 6.500h15v7H.5z" fill="#eee" /><path d="M2 8.500h12M3 10.500h11" strokeDasharray="1 1" /><path d="M4 12h8" /><path d="M5 2l2 2l2-2l2 2" /></Svg>
          </QuickButton>
          <Divider $gap={7} />
          <QuickButton $gap={7} aria-label="帮助">
            <Svg w={14} h={16}><path d="M1.500 1.500h11v11h-2v3l-3-3h-6z" fill="#fffcd0" /><path d="M5 5q0-2 2-2t2 2q0 1-2 2v1.500M7 10v1" strokeWidth="1.500" stroke="#202040" /></Svg>
          </QuickButton>
          <Tray>
            <Svg w={8} h={9}><path d="M3.500 2l-3 3l3 3M7.500 2l-3 3l3 3" strokeWidth="1.500" /></Svg>
            <Svg w={15} h={16}><path d="M5.500 1.500h8v7h-8z" fill="#384088" stroke="#8890c0" /><path d="M1.500 6.500h8v6h-8z" fill="#283078" stroke="#9098c8" /><path d="M3 14.500h6M10 10.500h4" stroke="#606890" strokeWidth="2" /></Svg>
            <Svg w={13} h={16}><path d="M6.500 1.500l5 1.500v6q0 3-5 6q-5-3-5-6V3z" fill="#88c848" stroke="#508828" /><path d="M6 4l2 3l-2 4l-2-4z" fill="#fff" stroke="#fff" /></Svg>
            <Svg w={16} h={16}><circle cx="8" cy="8" r="7" fill="#f0e820" stroke="#90c020" /><path d="M2 11q5 4 12-5q1 6-3 8q-6 2-9-3z" fill="#48a828" stroke="none" /><path d="M4 7.500h8M8 4v8" stroke="#185010" strokeWidth="2" /></Svg>
            <Svg w={10} h={16}><path d="M.5 2.500h9v12h-9z" fill="#1020c8" stroke="#001048" /><path d="M3 1.500h4" stroke="#384060" strokeWidth="2" /><path d="M2.500 5v8" stroke="#6088ff" /></Svg>
            <Latin>5:55</Latin>
          </Tray>
        </TaskBar>
      </Desktop>
      <Brand>
        <Svg w={57} h={60}>
          <path d="M23 29C10 33 1 19 2 8C3 0 14 2 21 7C30 14 36 26 35 33" stroke="#a8b4c4" strokeWidth="3" />
          <path d="M35 33C40 18 54 14 55 24C56 38 46 54 36 55C29 56 29 43 35 33" stroke="#eea8ac" strokeWidth="3" />
          <path d="M35 33C20 29 10 36 11 41C14 50 34 46 35 33" stroke="#dfe3ea" strokeWidth="2" />
        </Svg>
        <BrandText>
          <BrandName>野火论坛</BrandName>
          <BrandLink href="#">www.proewildfire.cn</BrandLink>
        </BrandText>
      </Brand>
    </Page>
  );
}
